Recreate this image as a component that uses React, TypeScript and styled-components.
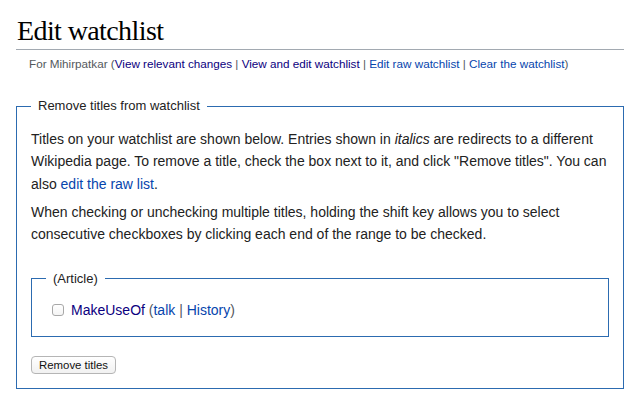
import React from "react";
import styled, { createGlobalStyle } from "styled-components";

const Global = createGlobalStyle`
  html, body { margin: 0; padding: 0; background: #fff; }
  body { font-family: "Liberation Sans", Arial, sans-serif; color: #222; }
`;

const Page = styled.div`
  padding: 0 16px;
`;

const Heading = styled.h1`
  margin: 12px 0 0;
  padding: 0 0 0 1px;
  font-family: "Liberation Serif", "Times New Roman", serif;
  font-weight: normal;
  font-size: 28px;
  line-height: 37px;
  letter-spacing: -0.6px;
  color: #000;
  border-bottom: 1px solid #a2a9b1;
`;

const Sub = styled.div`
  margin: 6px 0 0;
  padding-left: 13px;
  font-size: 11.7px;
  line-height: 16px;
  color: #54595d;
`;

const Link = styled.a<{ $visited?: boolean }>`
  color: ${(p) => (p.$visited ? "#0b0080" : "#0645ad")};
  text-decoration: none;
`;

const Sep = styled.span`
  color: #54595d;
`;

const Fieldset = styled.fieldset<{ $inner?: boolean }>`
  margin: ${(p) => (p.$inner ? "25px 0 0" : "26px 0 0")};
  padding: ${(p) => (p.$inner ? "0 14px 15px 13px" : "0 14px 14px 14px")};
  border: 1px solid #2c6bb0;
  min-width: 0;
`;

const Legend = styled.legend<{ $offset?: number }>`
  margin-left: ${(p) => p.$offset ?? 0}px;
  padding: 0 7px;
  font-size: 13px;
  line-height: 16px;
  color: #222;
`;

const Para = styled.p<{ $first?: boolean }>`
  margin: ${(p) => (p.$first ? "14px 0 0" : "5.6px 0 0")};
  font-size: 14px;
  line-height: 22.4px;
  color: #222;
`;

const Row = styled.label`
  display: flex;
  align-items: center;
  gap: 7px;
  margin: 12px 0 0 7px;
  font-size: 14px;
  line-height: 22.4px;
  color: #54595d;
`;

const Check = styled.input`
  appearance: none;
  margin: 0;
  width: 12px;
  height: 12px;
  border: 1px solid #a8a8a8;
  border-radius: 3px;
  background: linear-gradient(#fff, #f4f4f4);
  box-sizing: border-box;
`;

const Button = styled.button`
  margin-top: 19px;
  height: 18px;
  padding: 0 7px;
  font-family: "Liberation Sans", Arial, sans-serif;
  font-size: 11.4px;
  line-height: 16px;
  color: #111;
  background: linear-gradient(#ffffff, #f1f1f1);
  border: 1px solid #b5b5b5;
  border-radius: 4px;
  display: block;
`;

export default function App() {
  return (
    <>
      <Global />
      <Page>
        <Heading>Edit watchlist</Heading>
        <Sub>
          For Mihirpatkar (<Link $visited href="#">View relevant changes</Link>
          <Sep> | </Sep>
          <Link $visited href="#">View and edit watchlist</Link>
          <Sep> | </Sep>
          <Link href="#">Edit raw watchlist</Link>
          <Sep> | </Sep>
          <Link href="#">Clear the watchlist</Link>)
        </Sub>
        <Fieldset>
          <Legend>Remove titles from watchlist</Legend>
          <Para $first>
            Titles on your watchlist are shown below. Entries shown in <i>italics</i> are
            redirects to a different Wikipedia page. To remove a title, check the box next
            to it, and click "Remove titles". You can also{" "}
            <Link href="#">edit the raw list</Link>.
          </Para>
          <Para>
            When checking or unchecking multiple titles, holding the shift key allows you
            to select consecutive checkboxes by clicking each end of the range to be
            checked.
          </Para>
          <Fieldset $inner>
            <Legend $offset={1}>(Article)</Legend>
            <Row>
              <Check type="checkbox" />
              <span>
                <Link $visited href="#">MakeUseOf</Link> (<Link href="#">talk</Link>
                <Sep> | </Sep>
                <Link href="#">History</Link>)
              </span>
            </Row>
          </Fieldset>
          <Button type="button">Remove titles</Button>
        </Fieldset>
      </Page>
    </>
  );
}
